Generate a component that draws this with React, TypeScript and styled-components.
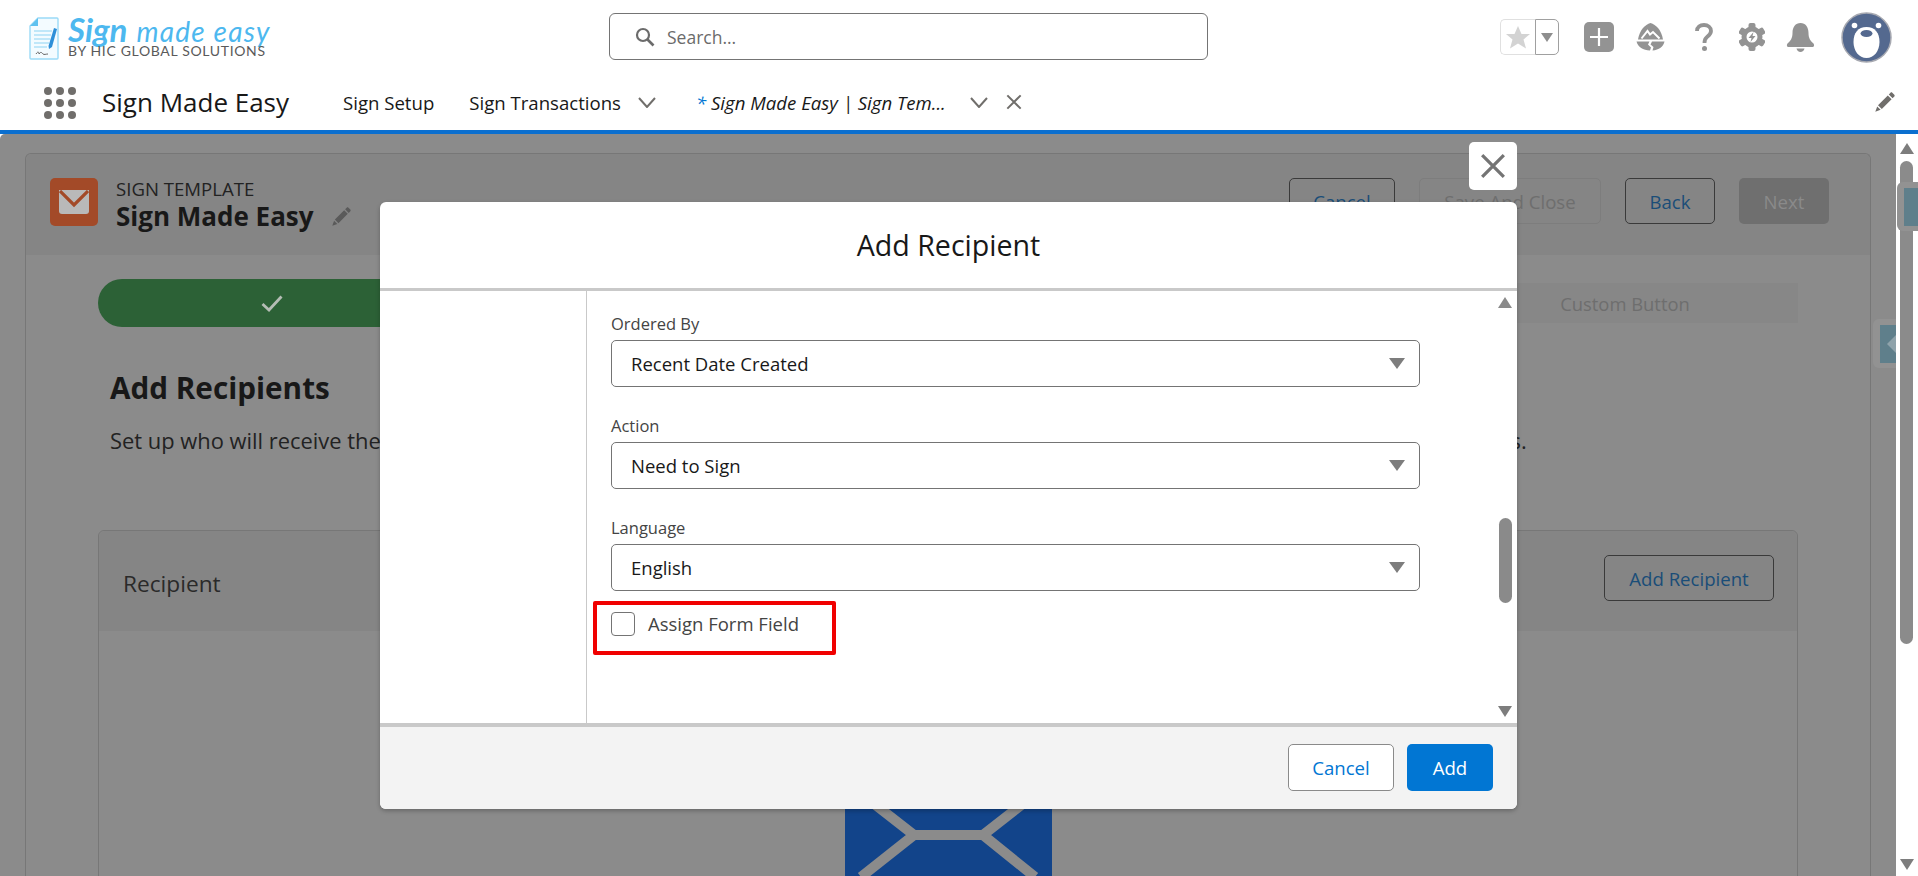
import styled, { createGlobalStyle } from 'styled-components'

const GlobalStyle = createGlobalStyle`
  html, body {
    margin: 0;
    padding: 0;
    background: #fff;
    overflow: hidden;
  }
  * {
    box-sizing: border-box;
  }
  body {
    font-family: "Open Sans", "Noto Sans", sans-serif;
    color: #181818;
  }
`

const Shell = styled.div`
  width: 1918px;
  height: 876px;
  display: flex;
  flex-direction: column;
  overflow: hidden;
`

const TopBar = styled.header`
  height: 74px;
  display: grid;
  grid-template-columns: 609px 599px 1fr;
  align-items: start;
`

const Logo = styled.div`
  display: flex;
  padding: 17px 0 0 29px;
  gap: 9px;
`

const LogoText = styled.div`
  display: flex;
  flex-direction: column;
  font-family: Lato, sans-serif;
`

const LogoTitle = styled.div`
  height: 27px;
  line-height: 24px;
  font-style: italic;
  color: #4db8ef;
  white-space: nowrap;
  b {
    font-weight: 700;
    font-size: 33px;
    margin-right: 9px;
  }
  span {
    font-size: 28px;
    letter-spacing: 1.2px;
  }
`

const LogoSub = styled.div`
  font-size: 14px;
  line-height: 14px;
  color: #5a5a5a;
  letter-spacing: 0.66px;
  white-space: nowrap;
`

const SearchBox = styled.div`
  margin-top: 13px;
  height: 47px;
  border: 1px solid #747474;
  border-radius: 6px;
  display: flex;
  align-items: center;
  padding-left: 25px;
  gap: 12px;
  font-size: 17.5px;
  color: #6b6b6b;
`

const GlobalActions = styled.div`
  display: flex;
  align-items: flex-start;
  padding-left: 292px;
`

const FavGroup = styled.div`
  margin-top: 19px;
  width: 59px;
  height: 36px;
  display: flex;
`

const FavStar = styled.div`
  width: 35px;
  border: 1px solid #e0e0e0;
  border-right: 0;
  border-radius: 5px 0 0 5px;
  display: flex;
  align-items: center;
  justify-content: center;
`

const FavMenu = styled.div`
  flex: 1;
  border: 1px solid #a0a0a0;
  border-radius: 0 5px 5px 0;
  display: flex;
  align-items: center;
  justify-content: center;
`

const Caret = styled.span<{ $up?: boolean; $w?: number; $h?: number; $color?: string }>`
  display: block;
  width: 0;
  height: 0;
  border-left: ${(p) => (p.$w ?? 16) / 2}px solid transparent;
  border-right: ${(p) => (p.$w ?? 16) / 2}px solid transparent;
  ${(p) => (p.$up ? 'border-bottom' : 'border-top')}: ${(p) => p.$h ?? 11}px solid ${(p) => p.$color ?? '#7d7d7d'};
`

const LeftArrow = styled.span`
  display: block;
  width: 0;
  height: 0;
  border-top: 9px solid transparent;
  border-bottom: 9px solid transparent;
  border-right: 9px solid #8fa3ab;
`

const ActionIcon = styled.div<{ $left: number; $top?: number }>`
  margin-left: ${(p) => p.$left}px;
  margin-top: ${(p) => p.$top ?? 23}px;
  display: flex;
`

const PlusButton = styled.div`
  margin-left: 25px;
  margin-top: 22px;
  width: 30px;
  height: 30px;
  border-radius: 5px;
  background: #939393;
  display: flex;
  align-items: center;
  justify-content: center;
`

const NavBar = styled.nav`
  height: 60px;
  border-bottom: 4px solid #0b6fcf;
  display: flex;
  align-items: center;
  padding: 0 23px 0 44px;
`

const Waffle = styled.div`
  width: 32px;
  height: 32px;
  display: grid;
  grid-template-columns: repeat(3, 8px);
  grid-template-rows: repeat(3, 8px);
  justify-content: space-between;
  align-content: space-between;
  margin-top: 2px;
  i {
    background: #706e6b;
    border-radius: 50%;
  }
`

const AppName = styled.div`
  margin-left: 26px;
  width: 241px;
  font-size: 26px;
  white-space: nowrap;
`

const NavItem = styled.div<{ $left?: number }>`
  margin-left: ${(p) => p.$left ?? 0}px;
  font-size: 18.6px;
  white-space: nowrap;
`

const NavGlyph = styled.svg<{ $left: number }>`
  margin-left: ${(p) => p.$left}px;
  flex: none;
`

const ActiveTab = styled.div`
  margin-left: 40px;
  width: 248px;
  font-size: 18.6px;
  font-style: italic;
  white-space: nowrap;
  span {
    color: #0176d3;
  }
`

const EditNav = styled.svg`
  margin-left: auto;
`

const Stage = styled.main`
  height: 742px;
  display: flex;
  position: relative;
  overflow: hidden;
`

const Page = styled.div`
  width: 1896px;
  background: #8b8b8b;
  border-radius: 5px 0 0 0;
  padding: 19px 25px 0;
`

const PageCard = styled.section`
  height: 100%;
  border: 1px solid #777;
  border-bottom: 0;
  border-radius: 6px 6px 0 0;
`

const CardHead = styled.div`
  height: 101px;
  background: #858585;
  border-radius: 6px 6px 0 0;
  display: flex;
  align-items: flex-start;
  padding: 24px 41px 0 24px;
`

const BrandIcon = styled.div`
  width: 48px;
  height: 48px;
  border-radius: 5px;
  background: #a34a28;
  display: flex;
  align-items: center;
  justify-content: center;
`

const TitleBlock = styled.div`
  margin-left: 18px;
`

const Eyebrow = styled.div`
  font-size: 18.6px;
  line-height: 22px;
  color: #222;
`

const TitleRow = styled.div`
  display: flex;
  align-items: center;
  gap: 18px;
  margin-top: 1px;
  font-size: 26px;
  line-height: 30px;
  font-weight: 700;
  color: #181818;
  white-space: nowrap;
`

const HeadActions = styled.div`
  margin-left: auto;
  display: flex;
  gap: 24px;
`

const Button = styled.div<{ $w: number; $h?: number; $kind?: 'outline' | 'muted' | 'disabled' | 'white' | 'brand' }>`
  width: ${(p) => p.$w}px;
  height: ${(p) => p.$h ?? 46}px;
  border-radius: 5px;
  display: flex;
  align-items: center;
  justify-content: center;
  font-size: 18.6px;
  white-space: nowrap;
  ${(p) => {
    switch (p.$kind) {
      case 'muted':
        return 'border: 1px solid #7d7d7d; color: #6e6e6e;'
      case 'disabled':
        return 'background: #6f6f6f; color: #8a8a8a;'
      case 'white':
        return 'background: #fff; border: 1px solid #8a8a8a; color: #0176d3;'
      case 'brand':
        return 'background: #0176d3; color: #fff;'
      default:
        return 'border: 1px solid #3a3a3a; color: #1a4d78;'
    }
  }}
`

const Steps = styled.div`
  margin: 24px 72px 0;
  display: flex;
  align-items: center;
`

const Step = styled.div<{ $done?: boolean }>`
  flex: 0 0 20%;
  height: ${(p) => (p.$done ? 48 : 40)}px;
  display: flex;
  align-items: center;
  justify-content: center;
  font-size: 18.4px;
  color: #6e6e6e;
  background: ${(p) => (p.$done ? '#2c6136' : '#878787')};
  border-radius: ${(p) => (p.$done ? '24px 0 0 24px' : '0')};
  padding: ${(p) => (p.$done ? '0 0 0 7px' : '0 6px 0 0')};
`

const Intro = styled.div`
  margin: 42px 84px 0;
`

const Heading = styled.h2`
  margin: 0;
  font-size: 29.7px;
  line-height: 38px;
  font-weight: 700;
  color: #181818;
`

const IntroText = styled.p`
  margin: 21px 0 0;
  font-size: 21.9px;
  line-height: 26px;
  color: #222;
  white-space: nowrap;
`

const RecipientCard = styled.section`
  margin: 76px 72px 0;
  height: 400px;
  border: 1px solid #777;
  border-radius: 6px 6px 0 0;
`

const RecipientHead = styled.div`
  height: 100px;
  background: #858585;
  border-radius: 6px 6px 0 0;
  display: flex;
  align-items: flex-start;
  justify-content: space-between;
  padding: 24px 23px 0 24px;
  font-size: 22.7px;
  color: #2a2a2a;
`

const RecipientName = styled.div`
  line-height: 58px;
`

const RecipientBody = styled.div`
  display: flex;
  justify-content: center;
  padding-top: 157px;
`

const PageScroll = styled.aside`
  flex: 1;
  background: #fff;
  display: flex;
  flex-direction: column;
  align-items: flex-start;
  padding: 9px 0 0 4px;
`

const PageThumb = styled.div`
  margin-top: 7px;
  width: 13px;
  height: 483px;
  border-radius: 7px;
  background: #8b8b8b;
`

const PageScrollEnd = styled.div`
  margin-top: 215px;
`

const SideTab = styled.div<{ $right: number; $top: number; $w: number }>`
  position: absolute;
  right: ${(p) => p.$right}px;
  top: ${(p) => p.$top}px;
  width: ${(p) => p.$w}px;
  height: 49px;
  background: #929292;
  border-radius: 6px 0 0 6px;
  display: flex;
  align-items: center;
  justify-content: flex-end;
`

const SideTabInner = styled.div<{ $w: number }>`
  width: ${(p) => p.$w}px;
  height: 38px;
  background: #5f7f8b;
  display: flex;
  align-items: center;
  justify-content: flex-end;
  overflow: hidden;
`

const Modal = styled.div`
  position: absolute;
  left: 380px;
  top: 68px;
  width: 1137px;
  height: 607px;
  background: #fff;
  border-radius: 6px;
  box-shadow: 0 2px 4px rgba(0, 0, 0, 0.25);
  display: flex;
  flex-direction: column;
  overflow: hidden;
`

const CloseButton = styled.div`
  position: absolute;
  left: 1469px;
  top: 8px;
  width: 48px;
  height: 48px;
  background: #fff;
  border-radius: 5px;
  display: flex;
  align-items: center;
  justify-content: center;
`

const ModalHead = styled.div`
  height: 89px;
  border-bottom: 3px solid #c9c9c9;
  display: flex;
  align-items: center;
  justify-content: center;
  font-size: 28.6px;
  padding-bottom: 2px;
`

const ModalBody = styled.div`
  height: 432px;
  display: flex;
  position: relative;
`

const ModalSide = styled.div`
  width: 207px;
  border-right: 1px solid #c9c9c9;
`

const ModalForm = styled.div`
  padding: 22px 0 0 24px;
  width: 833px;
`

const Field = styled.div`
  & + & {
    margin-top: 28px;
  }
`

const Label = styled.div`
  height: 22px;
  line-height: 22px;
  margin-bottom: 5px;
  font-size: 16.5px;
  color: #444;
`

const Select = styled.div`
  height: 47px;
  border: 1px solid #747474;
  border-radius: 5px;
  display: flex;
  align-items: center;
  justify-content: space-between;
  padding: 0 14px 0 19px;
  font-size: 18.5px;
  color: #181818;
`

const AssignRow = styled.div`
  width: 243px;
  height: 54px;
  margin: 10px 0 0 -18px;
  border: 4px solid #f00000;
  border-radius: 2px;
  display: flex;
  align-items: flex-start;
  gap: 13px;
  padding: 7px 0 0 14px;
  font-size: 18.5px;
  color: #444;
`

const Checkbox = styled.span`
  width: 24px;
  height: 24px;
  flex: none;
  border: 1px solid #747474;
  border-radius: 4px;
  background: #fff;
`

const AssignLabel = styled.span`
  line-height: 24px;
`

const ModalScroll = styled.div`
  position: absolute;
  right: 5px;
  top: 6px;
  bottom: 6px;
  width: 14px;
  display: flex;
  flex-direction: column;
  align-items: center;
`

const ModalThumb = styled.div`
  margin-top: 210px;
  width: 13px;
  height: 85px;
  border-radius: 7px;
  background: #8a8a8a;
`

const ModalScrollEnd = styled.div`
  margin-top: auto;
`

const ModalFoot = styled.div`
  flex: 1;
  border-top: 4px solid #c9c9c9;
  background: #f3f3f3;
  display: flex;
  justify-content: flex-end;
  align-items: flex-start;
  gap: 13px;
  padding: 17px 24px 0 0;
`

const gray = '#939393'

const Chevron = ({ left }: { left: number }) => (
  <NavGlyph $left={left} width="18" height="11" viewBox="0 0 18 11">
    <polyline points="1,1 9,10 17,1" fill="none" stroke="#706e6b" strokeWidth="2" />
  </NavGlyph>
)

const DocIcon = () => (
  <svg width="30" height="43" viewBox="0 0 30 43">
    <path d="M9 1H28a1 1 0 0 1 1 1V41a1 1 0 0 1-1 1H2a1 1 0 0 1-1-1V9Z" fill="#f3fbff" stroke="#9bdaf7" strokeWidth="1.4" />
    <path d="M9 1V9H1Z" fill="#5ec1ef" />
    <path d="M5 14H23M5 18H22M5 22H21M5 26H20M5 30H18" stroke="#8ed3f4" strokeWidth="1.2" />
    <path d="M25 11l3 1-5 18-3 2-.5-3Z" fill="#2e8fd8" />
    <path d="M7 37c2-3 3-2 3 0 2-3 3-1 4 0s3 0 5 0" fill="none" stroke="#555" strokeWidth=".9" />
  </svg>
)

const TrailIcon = () => (
  <svg width="29" height="28" viewBox="0 0 29 28">
    <path d="M14.5 0C9 1.5 3.5 7 2 16.5H27C25.5 7 20 1.5 14.5 0Z" fill={gray} />
    <path d="M.5 18.5H13.5L12 21.5 15 24.5 14 27.5C7 27.5 2 24 .5 18.5Z" fill={gray} />
    <path d="M16 18.5H28.5C27.5 23.5 23 27 16.5 27.5L17.5 24 14.5 21.5Z" fill={gray} />
    <path d="M5.5 15.5L11.5 8 14 11.5 17 9 23.5 15.5" fill="none" stroke="#fff" strokeWidth="2" />
  </svg>
)

const HelpIcon = () => (
  <svg width="18" height="28" viewBox="0 0 18 28">
    <path d="M2 8C2 4 5 2 9 2 13 2 16 4.5 16 8 16 11 14 12.5 12 14 10 15.5 9.5 17 9.5 20" fill="none" stroke={gray} strokeWidth="3.8" />
    <circle cx="9.5" cy="25.5" r="2.5" fill={gray} />
  </svg>
)

const GearIcon = () => (
  <svg width="26" height="28" viewBox="0 0 26 28">
    <g fill={gray}>
      {[0, 60, 120, 180, 240, 300].map((a) => (
        <rect key={a} x="9.5" y="0" width="7" height="8" rx="2" transform={`rotate(${a} 13 14)`} />
      ))}
    </g>
    <circle cx="13" cy="14" r="8" fill="none" stroke={gray} strokeWidth="5" />
    <path d="M14.5 9L9.5 15H12.5L11.5 19 16.5 13H13.5Z" fill={gray} />
  </svg>
)

const BellIcon = () => (
  <svg width="29" height="29" viewBox="0 0 29 29">
    <path d="M14.5 0C9.5 0 6.5 4 6.5 10 6.5 15 4.5 18 2 20 .5 21.2.5 24 2.5 24H26.5C28.5 24 28.5 21.2 27 20 24.5 18 22.5 15 22.5 10 22.5 4 19.5 0 14.5 0Z" fill={gray} />
    <path d="M10.5 25.5H18.5C18 27.5 16.5 29 14.5 29S11 27.5 10.5 25.5Z" fill={gray} />
  </svg>
)

const Avatar = () => (
  <svg width="51" height="51" viewBox="0 0 51 51">
    <circle cx="25.5" cy="25.5" r="24.5" fill="#54698f" stroke="#a7a9b1" strokeWidth="1.5" />
    <circle cx="13.5" cy="13.5" r="2.8" fill="#fff" />
    <circle cx="37.5" cy="13.5" r="2.8" fill="#fff" />
    <path d="M25.5 15C17 15 12.5 21 12.5 30 12.5 39 18 46 25.5 46S38.5 39 38.5 30C38.5 21 34 15 25.5 15Z" fill="#fff" />
    <ellipse cx="25.5" cy="21.5" rx="6" ry="3.5" fill="#54698f" />
  </svg>
)

const pencilPath =
  'M3 13.2L12.8 3.4 16.6 7.2 6.8 17ZM13.8 2.4L15.5.7C16 .2 16.8.2 17.3.7L19.3 2.7C19.8 3.2 19.8 4 19.3 4.5L17.6 6.2ZM2.2 14.4L5.6 17.8.3 19.7Z'

export default function App() {
  return (
    <Shell>
      <GlobalStyle />
      <TopBar>
        <Logo>
          <DocIcon />
          <LogoText>
            <LogoTitle>
              <b>Sign</b>
              <span>made easy</span>
            </LogoTitle>
            <LogoSub>BY HIC GLOBAL SOLUTIONS</LogoSub>
          </LogoText>
        </Logo>
        <SearchBox>
          <svg width="20" height="20" viewBox="0 0 20 20">
            <circle cx="8" cy="8" r="6" fill="none" stroke="#6b6b6b" strokeWidth="2.2" />
            <path d="M12.5 12.5L18.5 18.5" stroke="#6b6b6b" strokeWidth="2.6" />
          </svg>
          Search...
        </SearchBox>
        <GlobalActions>
          <FavGroup>
            <FavStar>
              <svg width="24" height="23" viewBox="0 0 24 23">
                <path d="M12 0L15.5 8H24L17.5 13.5 20 22.5 12 17.5 4 22.5 6.5 13.5 0 8H8.5Z" fill="#d3d3d3" />
              </svg>
            </FavStar>
            <FavMenu>
              <Caret $w={13} $h={9} $color="#8e8e8e" />
            </FavMenu>
          </FavGroup>
          <PlusButton>
            <svg width="20" height="20" viewBox="0 0 20 20">
              <path d="M10 1V19M1 10H19" stroke="#fff" strokeWidth="2.2" />
            </svg>
          </PlusButton>
          <ActionIcon $left={22}>
            <TrailIcon />
          </ActionIcon>
          <ActionIcon $left={30}>
            <HelpIcon />
          </ActionIcon>
          <ActionIcon $left={26}>
            <GearIcon />
          </ActionIcon>
          <ActionIcon $left={21}>
            <BellIcon />
          </ActionIcon>
          <ActionIcon $left={26} $top={12}>
            <Avatar />
          </ActionIcon>
        </GlobalActions>
      </TopBar>
      <NavBar>
        <Waffle>
          {Array.from({ length: 9 }).map((_, i) => (
            <i key={i} />
          ))}
        </Waffle>
        <AppName>Sign Made Easy</AppName>
        <NavItem>Sign Setup</NavItem>
        <NavItem $left={35}>Sign Transactions</NavItem>
        <Chevron left={17} />
        <ActiveTab>
          <span>*</span> Sign Made Easy | Sign Tem...
        </ActiveTab>
        <Chevron left={26} />
        <NavGlyph $left={18} width="16" height="16" viewBox="0 0 24 24">
          <path d="M2 2L22 22M22 2L2 22" stroke="#706e6b" strokeWidth="3" fill="none" />
        </NavGlyph>
        <EditNav width="20" height="20" viewBox="0 0 20 20">
          <path d={pencilPath} fill="#706e6b" />
        </EditNav>
      </NavBar>
      <Stage>
        <Page>
          <PageCard>
            <CardHead>
              <BrandIcon>
                <svg width="30" height="24" viewBox="0 0 30 24">
                  <path d="M0 0H30V21a3 3 0 0 1-3 3H3a3 3 0 0 1-3-3Z" fill="#b9b9b9" />
                  <path d="M1 1L15 15 29 1" fill="none" stroke="#a34a28" strokeWidth="3.2" />
                </svg>
              </BrandIcon>
              <TitleBlock>
                <Eyebrow>SIGN TEMPLATE</Eyebrow>
                <TitleRow>
                  Sign Made Easy
                  <svg width="19" height="19" viewBox="0 0 20 20">
                    <path d={pencilPath} fill="#5a5a5a" />
                  </svg>
                </TitleRow>
              </TitleBlock>
              <HeadActions>
                <Button $w={106}>Cancel</Button>
                <Button $w={182} $kind="muted">
                  Save And Close
                </Button>
                <Button $w={90}>Back</Button>
                <Button $w={90} $kind="disabled">
                  Next
                </Button>
              </HeadActions>
            </CardHead>
            <Steps>
              <Step $done>
                <svg width="22" height="17" viewBox="0 0 22 17">
                  <path d="M1.5 9L8 15 20.5 1.5" fill="none" stroke="#b5bdb5" strokeWidth="2.8" />
                </svg>
              </Step>
              <Step />
              <Step />
              <Step />
              <Step>Custom Button</Step>
            </Steps>
            <Intro>
              <Heading>Add Recipients</Heading>
              <IntroText>
                Set up who will receive the document, the order in which they sign it, and the action each one of them has to take on all of their form fields.
              </IntroText>
            </Intro>
            <RecipientCard>
              <RecipientHead>
                <RecipientName>Recipient</RecipientName>
                <Button $w={170}>Add Recipient</Button>
              </RecipientHead>
              <RecipientBody>
                <svg width="207" height="140" viewBox="0 0 207 140">
                  <rect width="207" height="140" fill="#12448a" />
                  <path d="M5 -3L69 47M202 -3L138 47M69 47H138M69 47L16 89M138 47L190 89" fill="none" stroke="#8b8b8b" strokeWidth="10" />
                </svg>
              </RecipientBody>
            </RecipientCard>
          </PageCard>
        </Page>
        <PageScroll>
          <Caret $up $w={15} $h={11} />
          <PageThumb />
          <PageScrollEnd>
            <Caret $w={15} $h={11} />
          </PageScrollEnd>
        </PageScroll>
        <SideTab $right={22} $top={185} $w={23}>
          <SideTabInner $w={16}>
            <LeftArrow />
          </SideTabInner>
        </SideTab>
        <SideTab $right={0} $top={48} $w={21}>
          <SideTabInner $w={14} />
        </SideTab>
        <Modal>
          <ModalHead>Add Recipient</ModalHead>
          <ModalBody>
            <ModalSide />
            <ModalForm>
              <Field>
                <Label>Ordered By</Label>
                <Select>
                  Recent Date Created
                  <Caret />
                </Select>
              </Field>
              <Field>
                <Label>Action</Label>
                <Select>
                  Need to Sign
                  <Caret />
                </Select>
              </Field>
              <Field>
                <Label>Language</Label>
                <Select>
                  English
                  <Caret />
                </Select>
              </Field>
              <AssignRow>
                <Checkbox />
                <AssignLabel>Assign Form Field</AssignLabel>
              </AssignRow>
            </ModalForm>
            <ModalScroll>
              <Caret $up $w={14} $h={11} $color="#8a8a8a" />
              <ModalThumb />
              <ModalScrollEnd>
                <Caret $w={14} $h={11} $color="#7d7d7d" />
              </ModalScrollEnd>
            </ModalScroll>
          </ModalBody>
          <ModalFoot>
            <Button $w={106} $h={47} $kind="white">
              Cancel
            </Button>
            <Button $w={86} $h={47} $kind="brand">
              Add
            </Button>
          </ModalFoot>
        </Modal>
        <CloseButton>
          <svg width="26" height="26" viewBox="0 0 24 24">
            <path d="M2 2L22 22M22 2L2 22" stroke="#747474" strokeWidth="3" fill="none" />
          </svg>
        </CloseButton>
      </Stage>
    </Shell>
  )
}
